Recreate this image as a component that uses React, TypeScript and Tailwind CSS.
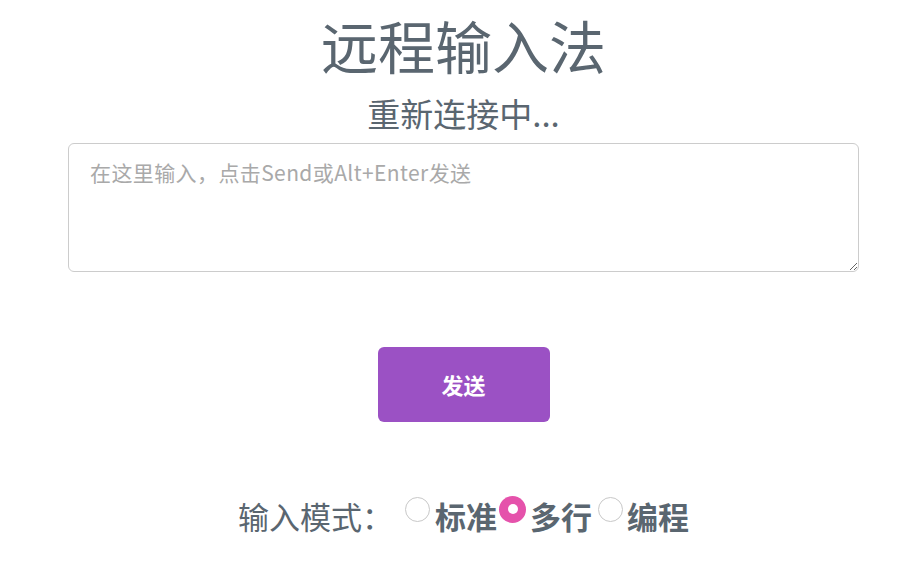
export default function App() {
  return (
    <div
      className="w-[916px] h-[572px] bg-white flex flex-col items-center pl-[11px] text-[#5a6670]"
      style={{ fontFamily: '"Noto Sans CJK SC", "Noto Sans", sans-serif' }}
    >
      <h1 className="mt-[8px] text-[57px] leading-[72px] font-normal">远程输入法</h1>
      <div className="mt-[13px] text-[33px] leading-[40px]">重新连接中...</div>
      <textarea
        className="mt-[10px] w-[791px] h-[129px] border border-[#cccccc] rounded-[6px] px-[21px] py-[14px] text-[21px] leading-[28px] tracking-[0.4px] placeholder:text-[#a9a9a9] outline-none"
        placeholder="在这里输入，点击Send或Alt+Enter发送"
      />
      <button className="mt-[75px] w-[172px] h-[75px] rounded-[6px] bg-[#9b51c4] text-white text-[22px] font-bold">
        发送
      </button>
      <div className="mt-[74px] flex items-center text-[31px] leading-[40px]">
        <span>输入模式：</span>
        <label className="ml-[12px] flex items-center font-bold">
          <span className="w-[25px] h-[25px] rounded-full border border-[#c8c8c8] bg-white -translate-y-[7px]" />
          <span className="ml-[5px]">标准</span>
        </label>
        <label className="ml-[2px] flex items-center font-bold">
          <span className="w-[27px] h-[27px] rounded-full bg-[#e552ab] flex items-center justify-center -translate-y-[7px]">
            <span className="w-[10px] h-[10px] rounded-full bg-white" />
          </span>
          <span className="ml-[4px]">多行</span>
        </label>
        <label className="ml-[6px] flex items-center font-bold">
          <span className="w-[25px] h-[25px] rounded-full border border-[#c8c8c8] bg-white -translate-y-[7px]" />
          <span className="ml-[4px]">编程</span>
        </label>
      </div>
    </div>
  );
}
